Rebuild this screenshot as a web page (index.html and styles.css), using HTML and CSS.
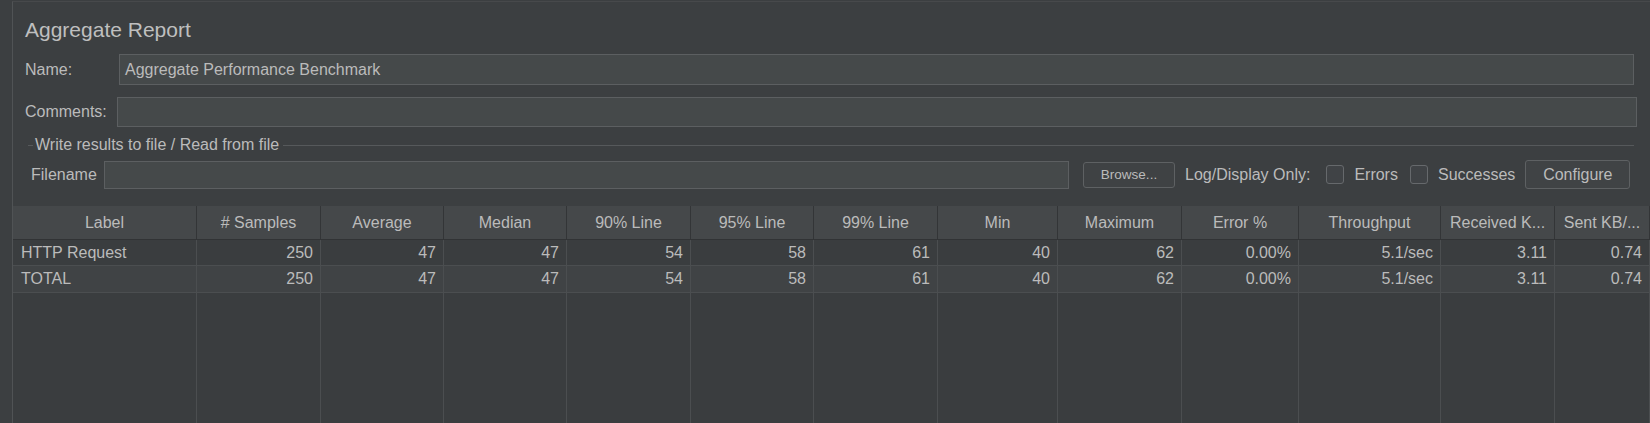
FILE: index.html
```html
<!DOCTYPE html>
<html lang="en">
<head>
<meta charset="utf-8">
<title>Aggregate Report</title>
<link rel="stylesheet" href="styles.css">
</head>
<body>
<div class="window">
  <div class="strip"></div>
  <div class="panel">
    <div class="form">
      <h1 class="title">Aggregate Report</h1>
      <div class="row row-name">
        <span class="label label-name">Name:</span>
        <div class="field field-name">Aggregate Performance Benchmark</div>
      </div>
      <div class="row row-comments">
        <span class="label label-comments">Comments:</span>
        <div class="field field-comments"></div>
      </div>
      <div class="group-title">
        <span class="dash"></span>
        <span class="group-text">Write results to file / Read from file</span>
        <span class="rule"></span>
      </div>
      <div class="row row-file">
        <span class="label label-file">Filename</span>
        <div class="field field-file"></div>
        <button class="btn btn-browse">Browse...</button>
        <span class="log-label">Log/Display Only:</span>
        <span class="check check-errors"></span>
        <span class="check-text">Errors</span>
        <span class="check check-succ"></span>
        <span class="check-text">Successes</span>
        <button class="btn btn-config">Configure</button>
      </div>
    </div>
    <div class="table">
      <div class="th">Label</div>
      <div class="th"># Samples</div>
      <div class="th">Average</div>
      <div class="th">Median</div>
      <div class="th">90% Line</div>
      <div class="th">95% Line</div>
      <div class="th">99% Line</div>
      <div class="th">Min</div>
      <div class="th">Maximum</div>
      <div class="th">Error %</div>
      <div class="th">Throughput</div>
      <div class="th">Received K...</div>
      <div class="th">Sent KB/...</div>

      <div class="td td-label">HTTP Request</div>
      <div class="td">250</div>
      <div class="td">47</div>
      <div class="td">47</div>
      <div class="td">54</div>
      <div class="td">58</div>
      <div class="td">61</div>
      <div class="td">40</div>
      <div class="td">62</div>
      <div class="td">0.00%</div>
      <div class="td">5.1/sec</div>
      <div class="td">3.11</div>
      <div class="td">0.74</div>

      <div class="td alt td-label">TOTAL</div>
      <div class="td alt">250</div>
      <div class="td alt">47</div>
      <div class="td alt">47</div>
      <div class="td alt">54</div>
      <div class="td alt">58</div>
      <div class="td alt">61</div>
      <div class="td alt">40</div>
      <div class="td alt">62</div>
      <div class="td alt">0.00%</div>
      <div class="td alt">5.1/sec</div>
      <div class="td alt">3.11</div>
      <div class="td alt">0.74</div>

      <div class="fill"></div><div class="fill"></div><div class="fill"></div>
      <div class="fill"></div><div class="fill"></div><div class="fill"></div>
      <div class="fill"></div><div class="fill"></div><div class="fill"></div>
      <div class="fill"></div><div class="fill"></div><div class="fill"></div>
      <div class="fill"></div>
    </div>
  </div>
</div>
</body>
</html>
```

FILE: styles.css
```css
html, body {
  margin: 0;
  padding: 0;
}
body {
  background: #3c3f41;
  color: #bbbbbb;
  font-family: "Liberation Sans", Arial, sans-serif;
  font-size: 16px;
  width: 1650px;
  height: 423px;
  overflow: hidden;
}
.window {
  display: flex;
  height: 423px;
}
.strip {
  width: 12px;
  flex: none;
  background: #3c3f41;
}
.panel {
  flex: 1;
  min-width: 0;
  margin-top: 1px;
  border-left: 1px solid #505355;
  border-top: 1px solid #47494b;
  display: flex;
  flex-direction: column;
}
.form {
  padding: 16px 13px 0 12px;
}
.title {
  margin: 0;
  font-size: 21px;
  line-height: 24px;
  height: 24px;
  font-weight: normal;
  color: #bfbfbf;
}
.row {
  display: flex;
  align-items: center;
}
.label {
  flex: none;
  font-size: 16px;
  line-height: 18px;
}
.row-name {
  margin-top: 12px;
  height: 31px;
}
.label-name { width: 94px; }
.row-comments {
  margin-top: 12px;
  height: 30px;
}
.label-comments { width: 92px; }
.field {
  box-sizing: border-box;
  background: #45494a;
  border: 1px solid #5c5f61;
  font-size: 16px;
  color: #bbbbbb;
  padding-left: 5px;
  display: flex;
  align-items: center;
}
.field-name {
  flex: 1;
  height: 31px;
  margin-right: 3px;
}
.field-comments {
  flex: 1;
  height: 30px;
}
.group-title {
  margin-top: 9px;
  height: 18px;
  display: flex;
  align-items: center;
  line-height: 18px;
  font-size: 16px;
}
.dash {
  width: 5px;
  height: 1px;
  margin-left: 3px;
  background: #56595b;
}
.group-text {
  margin-left: 2px;
}
.rule {
  flex: 1;
  height: 1px;
  margin-left: 4px;
  margin-right: 3px;
  background: #56595b;
}
.row-file {
  margin-top: 6px;
  height: 29px;
  padding-left: 6px;
}
.label-file { width: 73px; }
.field-file {
  width: 965px;
  height: 28px;
  flex: none;
}
.btn {
  box-sizing: border-box;
  font-family: "Liberation Sans", Arial, sans-serif;
  color: #bbbbbb;
  background: #3f4244;
  border: 1px solid #5e6163;
  border-radius: 3px;
  padding: 0;
  flex: none;
}
.btn-browse {
  margin-left: 14px;
  width: 92px;
  height: 26px;
  font-size: 13.5px;
}
.log-label {
  margin-left: 10px;
  flex: none;
}
.check {
  box-sizing: border-box;
  width: 18px;
  height: 19px;
  flex: none;
  border: 1px solid #66696c;
  border-radius: 3px;
  background: #404346;
}
.check-errors { margin-left: 16px; }
.check-succ { margin-left: 12px; }
.check-text {
  margin-left: 10px;
  flex: none;
}
.btn-config {
  margin-left: 10px;
  width: 105px;
  height: 29px;
  font-size: 16px;
  background: #404345;
}
.table {
  margin-top: 17px;
  display: grid;
  grid-template-columns: 184px 124px 123px 123px 124px 123px 124px 120px 124px 117px 142px 114px 95px;
  grid-template-rows: 34px 26px 27px 130px;
  font-size: 16px;
}
.th {
  box-sizing: border-box;
  background: #45484a;
  border-right: 1px solid #333537;
  border-bottom: 1px solid #313335;
  display: flex;
  align-items: center;
  justify-content: center;
  white-space: nowrap;
  overflow: hidden;
}
.td {
  box-sizing: border-box;
  background: #3a3d3f;
  border-right: 1px solid #4b4e50;
  border-bottom: 1px solid #4b4e50;
  display: flex;
  align-items: center;
  justify-content: flex-end;
  padding-right: 7px;
  white-space: nowrap;
}
.td.alt {
  background: #404345;
}
.td-label {
  justify-content: flex-start;
  padding-left: 8px;
  padding-right: 0;
}
.fill {
  box-sizing: border-box;
  background: #3a3d3f;
  border-right: 1px solid #4b4e50;
}
```
